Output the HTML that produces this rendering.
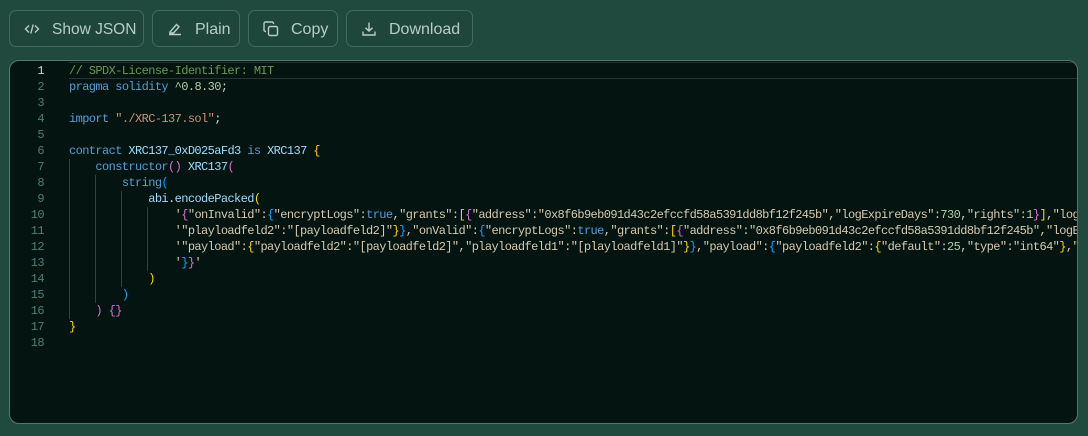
<!DOCTYPE html>
<html><head><meta charset="utf-8"><style>
*{margin:0;padding:0;box-sizing:border-box}
body{width:1088px;height:436px;background:#214a3e;overflow:hidden;font-family:"Liberation Sans",sans-serif;position:relative}
.btn{position:absolute;top:10px;height:37px;border:1px solid #3f6c5e;border-radius:7px;background:#1e463b;color:#b9cdc6;font-size:16px;display:flex;align-items:center;padding-left:14px;padding-top:3px}
.btn svg{margin-right:12px;margin-top:-3px}
.ed{position:absolute;left:9px;top:60px;width:1069px;height:364px;background:#031411;border:1px solid #4f7a6c;border-radius:10px;overflow:hidden}
.ln{position:absolute;left:0;top:2px;width:34px;text-align:right;font:12px/16px "Liberation Mono",monospace;letter-spacing:-0.6px;color:#4f7f74}
.ln div:first-child{color:#c8d8d2}
.code{position:absolute;left:59px;top:2px;font:12px/16px "Liberation Mono",monospace;letter-spacing:-0.6px;color:#d4d4d4;white-space:pre}
.cur{position:absolute;left:59px;top:1px;width:1040px;height:17px;border:1px solid #2a3230;border-left:none}
.g{position:absolute;width:1px;background:#3a3f3e}
.k{color:#569cd6}.c{color:#6a9955}.s{color:#ce9178}.n{color:#b5cea8}.i{color:#9cdcfe}.f{color:#dcdcaa}.t{color:#4ec9b0}
.y{color:#ffd700}.p{color:#da70d6}.b{color:#179fff}.j{color:#d7c9b0}
</style></head><body>
<div class="btn" style="left:9px;width:135px;font-size:15.5px"><svg width="16" height="16" viewBox="0 0 16 16" fill="none" stroke="#b9cdc6" stroke-width="1.4"><path d="M5 4.5 1.5 8 5 11.5M11 4.5 14.5 8 11 11.5M9.2 3.5 6.8 12.5"/></svg>Show JSON</div>
<div class="btn" style="left:152px;width:88px"><svg width="16" height="16" viewBox="0 0 16 16" fill="none" stroke="#b9cdc6" stroke-width="1.4"><path d="M2 13.5h12M3 11l6.5-7.5 2.5 2.3L6.5 12H3z"/></svg>Plain</div>
<div class="btn" style="left:248px;width:90px"><svg width="16" height="16" viewBox="0 0 16 16" fill="none" stroke="#b9cdc6" stroke-width="1.4"><rect x="5.5" y="5.5" width="9" height="9" rx="1.5"/><path d="M10.5 3V2.5A1.5 1.5 0 0 0 9 1H2.5A1.5 1.5 0 0 0 1 2.5V9a1.5 1.5 0 0 0 1.5 1.5H3"/></svg>Copy</div>
<div class="btn" style="left:346px;width:127px"><svg width="16" height="16" viewBox="0 0 16 16" fill="none" stroke="#b9cdc6" stroke-width="1.4"><path d="M8 1.5v8.5M4.5 6.8 8 10l3.5-3.2M2 10.5v3.5h12v-3.5"/></svg>Download</div>
<div class="ed">
<div class="cur"></div>
<div class="g" style="left:59px;top:98px;height:160px"></div>
<div class="g" style="left:85px;top:114px;height:128px"></div>
<div class="g" style="left:111px;top:130px;height:96px"></div>
<div class="g" style="left:137px;top:146px;height:64px"></div>
<div class="ln"><div>1</div><div>2</div><div>3</div><div>4</div><div>5</div><div>6</div><div>7</div><div>8</div><div>9</div><div>10</div><div>11</div><div>12</div><div>13</div><div>14</div><div>15</div><div>16</div><div>17</div><div>18</div></div>
<div class="code"><span class="c">// SPDX-License-Identifier: MIT</span>
<span class="k">pragma</span> <span class="k">solidity</span> <span class="n">^0.8.30</span>;

<span class="k">import</span> <span class="s">"./XRC-137.sol"</span>;

<span class="k">contract</span> <span class="i">XRC137_0xD025aFd3</span> <span class="k">is</span> <span class="i">XRC137</span> <span class="y">{</span>
    <span class="k">constructor</span><span class="p">()</span> <span class="i">XRC137</span><span class="p">(</span>
        <span class="k">string</span><span class="b">(</span>
            <span class="i">abi</span>.<span class="i">encodePacked</span><span class="y">(</span>
                <span class="j">'</span><span class="p">{</span><span class="j">"onInvalid":</span><span class="b">{</span><span class="j">"encryptLogs":</span><span class="k">true</span><span class="j">,"grants":</span><span class="y">[</span><span class="p">{</span><span class="j">"address":"0x8f6b9eb091d43c2efccfd58a5391dd8bf12f245b","logExpireDays":</span><span class="n">730</span><span class="j">,"rights":</span><span class="n">1</span><span class="p">}</span><span class="y">]</span><span class="j">,"logExpireDays"</span>
                <span class="j">'"playloadfeld2":"[payloadfeld2]"</span><span class="y">}</span><span class="b">}</span><span class="j">,"onValid":</span><span class="b">{</span><span class="j">"encryptLogs":</span><span class="k">true</span><span class="j">,"grants":</span><span class="y">[</span><span class="p">{</span><span class="j">"address":"0x8f6b9eb091d43c2efccfd58a5391dd8bf12f245b","logExpireDays"</span>
                <span class="j">'"payload":</span><span class="y">{</span><span class="j">"payloadfeld2":"[payloadfeld2]","playloadfeld1":"[playloadfeld1]"</span><span class="y">}</span><span class="b">}</span><span class="j">,"payload":</span><span class="b">{</span><span class="j">"payloadfeld2":</span><span class="y">{</span><span class="j">"default":</span><span class="n">25</span><span class="j">,"type":"int64"</span><span class="y">}</span><span class="j">,"payloadfeld1"</span>
                <span class="j">'</span><span class="b">}</span><span class="p">}</span><span class="j">'</span>
            <span class="y">)</span>
        <span class="b">)</span>
    <span class="p">)</span> <span class="p">{}</span>
<span class="y">}</span>
</div>
</div>
</body></html>
